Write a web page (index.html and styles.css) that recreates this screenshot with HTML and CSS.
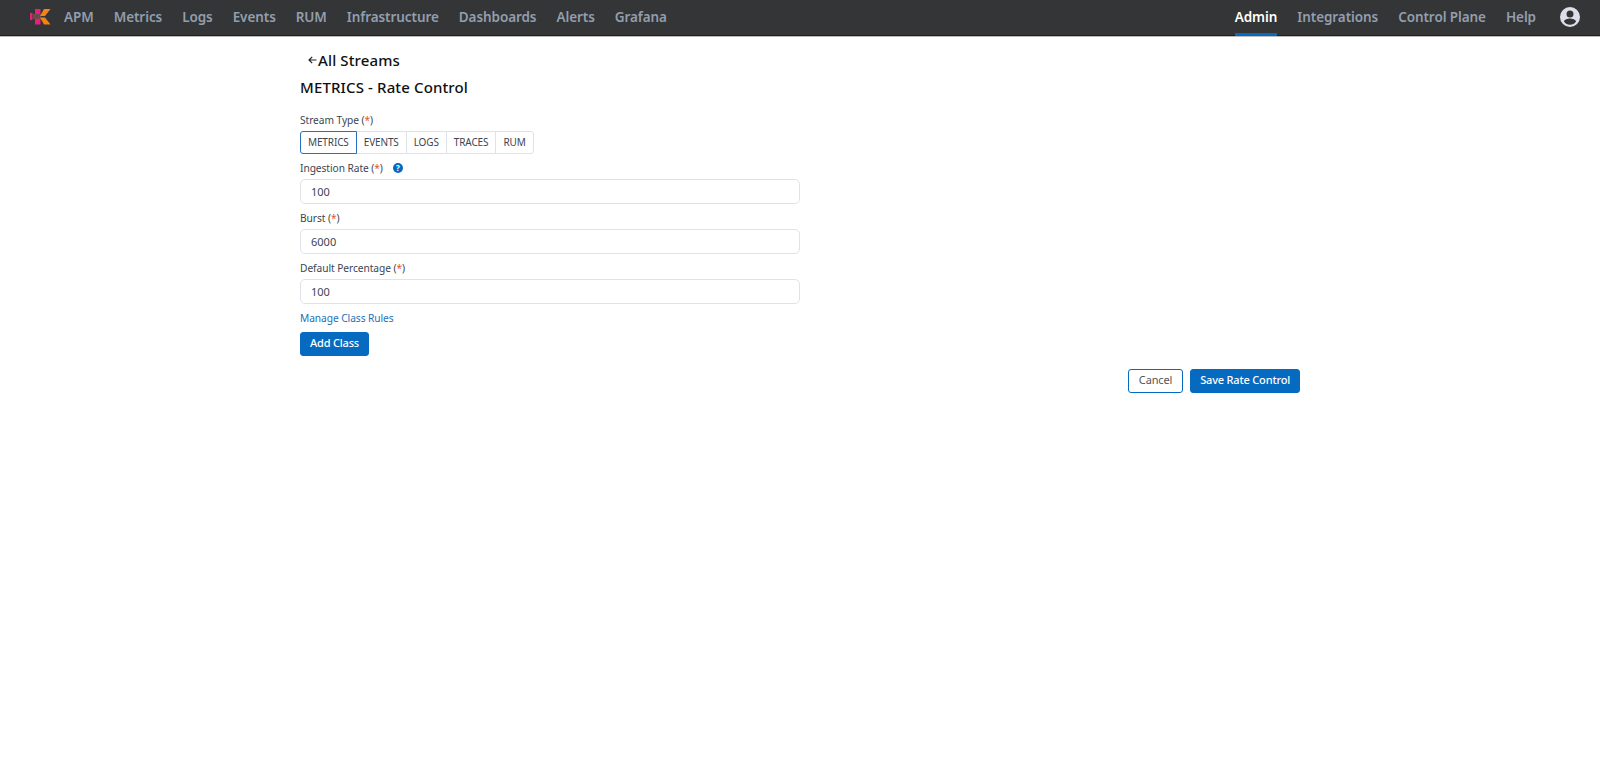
FILE: index.html
```html
<!DOCTYPE html>
<html lang="en">
<head>
  <meta charset="UTF-8" />
  <meta name="viewport" content="width=device-width, initial-scale=1.0" />
  <title>Rate Control</title>
  <link rel="stylesheet" href="styles.css">
</head>
<body>

<!-- Top navigation -->
<header class="navbar">
  <svg class="logo" width="22" height="18" viewBox="0 0 22 18">
    <path fill="#ec1e79" d="M0 5h2.500v7H0zM5 1h5.500v5H5zM5 11h5.500v5.500H5z"/>
    <path fill="#6b4c48" d="M3 6h8v5H3z"/>
    <path fill="#f58216" d="M14 1h6.500L15 8h-5zM10 9.500h5l5.500 7H14z"/>
  </svg>
  <nav class="nav-links">
    <a>APM</a>
    <a>Metrics</a>
    <a>Logs</a>
    <a>Events</a>
    <a>RUM</a>
    <a>Infrastructure</a>
    <a>Dashboards</a>
    <a>Alerts</a>
    <a>Grafana</a>
  </nav>
  <nav class="nav-links nav-right">
    <a class="active">Admin</a>
    <a>Integrations</a>
    <a>Control Plane</a>
    <a>Help</a>
  </nav>
  <svg class="avatar" width="20" height="20" viewBox="2 2 20 20">
    <path fill="#dcdfe8" d="M12 2a10 10 0 1 0 0 20 10 10 0 0 0 0-20zm0 3.500a3.500 3.500 0 1 1 0 7 3.500 3.500 0 0 1 0-7zm0 14.200a7.200 7.200 0 0 1-6-3.220c.03-1.990 4-3.080 6-3.080s5.970 1.090 6 3.080a7.200 7.200 0 0 1-6 3.220z"/>
  </svg>
</header>

<main class="container">
  <div class="back">
    <svg width="9" height="8" viewBox="0 0 9 8" fill="none" stroke="#222" stroke-width="1.200"><path d="M8.500 4H1M4.200 0.800L1 4l3.200 3.200"/></svg>
    <span>All Streams</span>
  </div>
  <h1 class="title">METRICS - Rate Control</h1>

  <div class="label">Stream Type (<b>*</b>)</div>
  <div class="btn-group">
    <button class="tab selected">METRICS</button>
    <button class="tab">EVENTS</button>
    <button class="tab">LOGS</button>
    <button class="tab">TRACES</button>
    <button class="tab">RUM</button>
  </div>

  <div class="label">Ingestion Rate (<b>*</b>)<span class="help">?</span></div>
  <input class="input" value="100" />

  <div class="label">Burst (<b>*</b>)</div>
  <input class="input" value="6000" />

  <div class="label">Default Percentage (<b>*</b>)</div>
  <input class="input" value="100" />

  <a class="label link">Manage Class Rules</a>
  <button class="btn btn-blue">Add Class</button>

  <div class="actions">
    <button class="btn btn-outline">Cancel</button>
    <button class="btn btn-blue">Save Rate Control</button>
  </div>
</main>

</body>
</html>
```
FILE: styles.css
```css
* { box-sizing: border-box; }
body { margin: 0; background: #fff; font-family: "Noto Sans", sans-serif; color: #3b4653; font-size: 11px; }

/* Navigation */
.navbar { height: 36px; background: #343537; border-bottom: 1px solid #1d1e20; box-shadow: 0 1px 0 #bbb; display: flex; align-items: flex-start; padding: 0 20px 0 30px; }
.logo { margin: 8px 12px 0 0; }
.nav-links { display: flex; gap: 20px; font-size: 13.5px; font-weight: 600; letter-spacing: -0.08px; color: #929eae; }
.nav-links a { height: 36px; line-height: 34px; white-space: nowrap; }
.nav-right { margin-left: auto; }
.nav-links .active { color: #fff; border-bottom: 3px solid #066ac1; }
.avatar { margin: 7px 0 0 24px; }

/* Form */
.container { width: 1000px; margin: 0 auto; padding-top: 14px; display: flex; flex-direction: column; align-items: flex-start; }
.back { display: flex; align-items: center; padding-left: 8px; gap: 1px; height: 20px; font-size: 15px; letter-spacing: 0.13px; font-weight: 500; color: #111; }
.title { margin: 7px 0 9px; height: 20px; line-height: 20px; font-size: 15px; letter-spacing: 0.13px; font-weight: 500; color: #111; }
.label { height: 25px; line-height: 28px; font-size: 10.2px; letter-spacing: -0.06px; display: flex; }
.label b { color: #e0562b; font-weight: 400; }
.help { width: 10px; height: 10px; margin: 9px 0 0 10px; border-radius: 50%; background: #066ac1; color: #fff; font-size: 8px; font-weight: 700; line-height: 10px; text-align: center; }
button { font-family: inherit; }
.btn-group { display: flex; }
.tab { height: 23px; padding: 0 7px 1px; margin-left: -1px; background: #fff; border: 1px solid #dfe3e8; color: #3b4653; font-size: 10px; letter-spacing: -0.13px; line-height: 20px; }
.tab.selected { margin-left: 0; border-color: #2a6fbd; border-radius: 3px 0 0 3px; position: relative; }
.tab:last-child { border-radius: 0 3px 3px 0; }
.input { width: 500px; height: 25px; padding: 0 10px; border: 1px solid #dfe3e8; border-radius: 5px; font: 11px "Noto Sans", sans-serif; color: #3b4653; outline: none; }
.link { color: #2470b8; margin-bottom: 3px; }
.btn { height: 24px; padding: 0 10px 2px; border-radius: 3px; border: 1px solid #066ac1; font-size: 11px; line-height: 20px; }
.btn-blue { padding: 0 9px 2px; background: #066ac1; color: #fff; font-weight: 500; letter-spacing: -0.18px; }
.btn-outline { letter-spacing: -0.15px; background: #fff; color: #555; }
.actions { align-self: flex-end; display: flex; gap: 7px; margin-top: 13px; }
```
